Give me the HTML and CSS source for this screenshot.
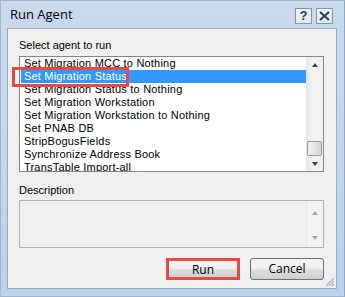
FILE: index.html
```html
<!DOCTYPE html>
<html lang="en">
<head>
    <meta charset="UTF-8">
    <title>Run Agent</title>
    <link rel="stylesheet" href="styles.css">
</head>
<body>
    <div class="window">
        <div class="titlebar">
            <span class="title">Run Agent</span>
            <div class="caption_btns">
                <i class="cap_btn">?</i>
                <i class="cap_btn">
                    <svg width="11" height="10" viewBox="0 0 11 10"><path d="M1 1 L10 9 M10 1 L1 9" stroke="#2b3b55" stroke-width="2"/></svg>
                </i>
            </div>
        </div>
        <div class="panel">
            <div class="label">Select agent to run</div>
            <div class="listbox">
                <div class="list_rows">
                    <div class="row">Set Migration MCC to Nothing</div>
                    <div class="row selected">Set Migration Status</div>
                    <div class="row">Set Migration Status to Nothing</div>
                    <div class="row">Set Migration Workstation</div>
                    <div class="row">Set Migration Workstation to Nothing</div>
                    <div class="row">Set PNAB DB</div>
                    <div class="row">StripBogusFields</div>
                    <div class="row">Synchronize Address Book</div>
                    <div class="row">TransTable Import-all</div>
                </div>
                <div class="vscroll">
                    <span class="arrow up"></span>
                    <span class="thumb"></span>
                    <span class="arrow down"></span>
                </div>
                <!-- 标注框 -->
                <div class="mark"></div>
            </div>
            <div class="label label_desc">Description</div>
            <div class="descbox">
                <div class="desc_text"></div>
                <div class="vscroll off">
                    <span class="arrow up"></span>
                    <span class="arrow down"></span>
                </div>
            </div>
            <div class="buttons">
                <button class="btn btn_run">Run</button>
                <button class="btn">Cancel</button>
            </div>
            <div class="grip">
                <svg width="10" height="10" viewBox="0 0 10 10"><path d="M9 1 L1 9 M9 4 L4 9 M9 7 L7 9" stroke="#a9b2bd" stroke-width="1.2"/></svg>
            </div>
        </div>
    </div>
</body>
</html>
```

FILE: styles.css
```css
*{
    margin: 0;
    padding: 0;
    box-sizing: border-box;
}
html, body{
    width: 345px;
    height: 297px;
    overflow: hidden;
    background-color: #c4d6ec;
}
.window{
    width: 345px;
    height: 297px;
    border: 1px solid #9db4d2;
    border-right-color: #8ea7c7;
    background: linear-gradient(#c9daef, #bcd1ea);
    display: flex;
    flex-direction: column;
    font-family: "Liberation Sans", Arial, sans-serif;
}
/* 标题栏 */
.titlebar{
    height: 27px;
    display: flex;
    align-items: center;
    justify-content: space-between;
    padding: 0 11px 2px 9px;
}
.title{
    font-family: "Open Sans", "Noto Sans", sans-serif;
    font-size: 13px;
    color: #000;
}
.caption_btns{
    display: flex;
    gap: 4px;
    margin-top: 4px;
}
.cap_btn{
    width: 17px;
    height: 16px;
    border: 1px solid #7f93b3;
    background: linear-gradient(#f3f6fb, #dfe7f2);
    display: flex;
    align-items: center;
    justify-content: center;
    font-style: normal;
    font-weight: bold;
    font-size: 13px;
    color: #2b3b55;
    line-height: 1;
}
/* 主面板 */
.panel{
    flex: 1;
    margin: 0 7px 7px 6px;
    border: 1px solid #9aa9bd;
    background-color: #f0f0f0;
    padding: 10px 12px 0 11px;
    position: relative;
    font-size: 11px;
}
.label{
    height: 13px;
    line-height: 13px;
    color: #000;
}
.listbox{
    margin-top: 4px;
    height: 116px;
    border: 1px solid #828790;
    background-color: #fff;
    display: flex;
    position: relative;
}
.list_rows{
    flex: 1;
    overflow: hidden;
    padding-left: 1px;
}
.row{
    height: 13px;
    line-height: 12px;
    padding-left: 3px;
    white-space: nowrap;
    letter-spacing: 0.2px;
    color: #000;
}
.row.selected{
    background-color: #3399ff;
    color: #fff;
}
/* 滚动条 */
.vscroll{
    width: 17px;
    background: linear-gradient(90deg, #e8e8e8, #f4f4f4 40%, #f0f0f0);
    border-left: 1px solid #e6e6e6;
    position: relative;
}
.arrow{
    position: absolute;
    left: 5px;
    width: 0;
    height: 0;
    border-left: 3.5px solid transparent;
    border-right: 3.5px solid transparent;
}
.arrow.up{
    top: 6px;
    border-bottom: 4px solid #404040;
}
.arrow.down{
    bottom: 5px;
    border-top: 4px solid #404040;
}
.thumb{
    position: absolute;
    left: 0;
    right: 1px;
    top: 84px;
    height: 15px;
    border: 1px solid #979797;
    border-radius: 2px;
    background: linear-gradient(90deg, #f3f3f3, #e2e2e2 60%, #d6d6d6);
}
.mark{
    position: absolute;
    left: -8px;
    top: 10px;
    width: 117px;
    height: 20px;
    border: 3px solid #e84b47;
}
.label_desc{
    margin-top: 12px;
}
.descbox{
    margin-top: 3px;
    height: 48px;
    border: 1px solid #adb2b9;
    background-color: #f0f0f0;
    display: flex;
}
.desc_text{
    flex: 1;
}
.vscroll.off{
    background: #f3f3f3;
    border-left: 1px solid #ebebeb;
}
.vscroll.off .arrow.up{
    top: 10px;
    border-bottom-color: #a6a6a6;
}
.vscroll.off .arrow.down{
    bottom: 7px;
    border-top-color: #a6a6a6;
}
/* 按钮 */
.buttons{
    margin-top: 10px;
    display: flex;
    justify-content: flex-end;
    gap: 10px;
}
.btn{
    width: 74px;
    height: 22px;
    border: 1px solid #707070;
    border-radius: 3px;
    background: linear-gradient(#f2f2f2 45%, #dddddd 55%, #cfcfcf);
    font-family: "Open Sans", "Noto Sans", sans-serif;
    font-size: 12px;
    color: #000;
    line-height: 18px;
}
.btn_run{
    border-radius: 0;
    border: 3px solid #e84b47;
}
.grip{
    position: absolute;
    right: 1px;
    bottom: 1px;
    width: 10px;
    height: 10px;
    display: flex;
}
```
